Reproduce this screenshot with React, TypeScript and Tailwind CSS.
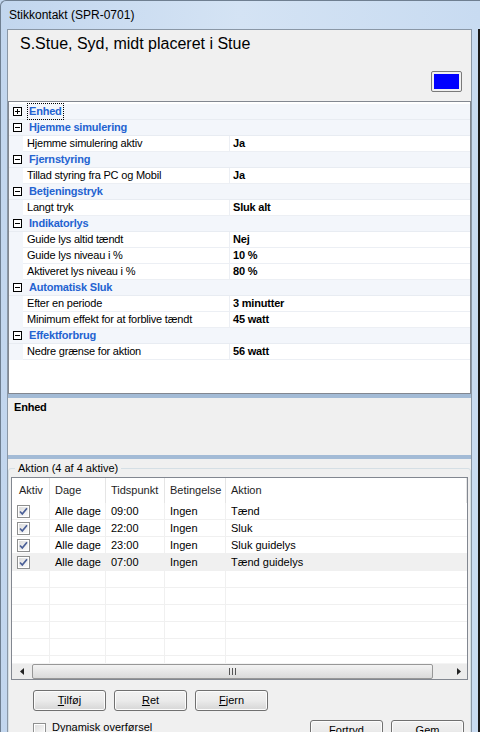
import React from "react";

const FONT = { fontFamily: '"Liberation Sans", Arial, sans-serif' };

type Prop = [string, string];
type Cat = { name: string; collapsed?: boolean; items: Prop[] };

const categories: Cat[] = [
  { name: "Enhed", collapsed: true, items: [] },
  { name: "Hjemme simulering", items: [["Hjemme simulering aktiv", "Ja"]] },
  { name: "Fjernstyring", items: [["Tillad styring fra PC og Mobil", "Ja"]] },
  { name: "Betjeningstryk", items: [["Langt tryk", "Sluk alt"]] },
  {
    name: "Indikatorlys",
    items: [
      ["Guide lys altid tændt", "Nej"],
      ["Guide lys niveau i %", "10 %"],
      ["Aktiveret lys niveau i %", "80 %"],
    ],
  },
  {
    name: "Automatisk Sluk",
    items: [
      ["Efter en periode", "3 minutter"],
      ["Minimum effekt for at forblive tændt", "45 watt"],
    ],
  },
  { name: "Effektforbrug", items: [["Nedre grænse for aktion", "56 watt"]] },
];

const actions = [
  { dage: "Alle dage", tid: "09:00", bet: "Ingen", aktion: "Tænd" },
  { dage: "Alle dage", tid: "22:00", bet: "Ingen", aktion: "Sluk" },
  { dage: "Alle dage", tid: "23:00", bet: "Ingen", aktion: "Sluk guidelys" },
  { dage: "Alle dage", tid: "07:00", bet: "Ingen", aktion: "Tænd guidelys" },
];

function ExpandBox({ plus }: { plus?: boolean }) {
  return (
    <svg width="9" height="9" viewBox="0 0 9 9" className="shrink-0">
      <rect x="0.5" y="0.5" width="8" height="8" fill="white" stroke="#000" />
      <line x1="2" y1="4.5" x2="7" y2="4.5" stroke="#000" />
      {plus && <line x1="4.5" y1="2" x2="4.5" y2="7" stroke="#000" />}
    </svg>
  );
}

function CheckIcon({ checked }: { checked?: boolean }) {
  return (
    <svg width="13" height="13" viewBox="0 0 13 13">
      <defs>
        <linearGradient id="cbg" x1="0" y1="0" x2="1" y2="1">
          <stop offset="0" stopColor="#dcdcdc" />
          <stop offset="1" stopColor="#fbfbfb" />
        </linearGradient>
      </defs>
      <rect x="0.5" y="0.5" width="12" height="12" fill="#fff" stroke="#8e8f8f" />
      <rect x="2" y="2" width="9" height="9" fill="url(#cbg)" />
      {checked && (
        <path d="M3 6.5 L5.3 9 L10 3.2" fill="none" stroke="#4a5f97" strokeWidth="1.7" />
      )}
    </svg>
  );
}

function Btn({ label, u, className }: { label: string; u: number; className?: string }) {
  return (
    <div
      className={
        "h-[21px] w-[73px] shrink-0 rounded-[3px] border border-[#707070] bg-gradient-to-b from-[#f2f2f2] via-[#ebebeb] to-[#d6d6d6] flex items-center justify-center text-[11px] text-black shadow-[inset_0_0_0_1px_#fcfcfc] " +
        (className ?? "")
      }
    >
      <span>
        <span className="underline">{label.slice(0, u)}</span>
        {label.slice(u)}
      </span>
    </div>
  );
}

function PropertyGrid() {
  return (
    <div className="h-[293px] shrink-0 border border-[#828790] bg-white pt-[2px] overflow-hidden tracking-[-0.2px]">
      {categories.map((c) => (
        <div key={c.name}>
          <div className="h-[16px] flex items-center bg-[#f3f6fb] border-b border-[#e8ecf2]">
            <div className="w-[14px] flex justify-end pr-[1px] pl-[2px]">
              <ExpandBox plus={c.collapsed} />
            </div>
            <div
              className={
                "ml-[5px] h-[15px] flex items-center px-[1px] text-[11px] font-bold text-[#2463d1] " +
                (c.collapsed ? "outline outline-1 outline-dotted outline-black" : "")
              }
            >
              {c.name}
            </div>
          </div>
          {c.items.map(([k, v]) => (
            <div key={k} className="h-[16px] flex text-[11px] text-black">
              <div className="w-[14px] bg-[#f3f6fb]" />
              <div className="w-[207px] flex items-center pl-[4px] border-b border-r border-[#eceff4]">
                {k}
              </div>
              <div className="flex-1 flex items-center pl-[3px] font-bold border-b border-[#eceff4]">
                {v}
              </div>
            </div>
          ))}
        </div>
      ))}
    </div>
  );
}

function ActionList() {
  const cols = ["w-[38px]", "w-[56px]", "w-[59px]", "w-[61px]", "flex-1"];
  return (
    <div className="mx-[2px] h-[203px] border border-[#828790] bg-white flex flex-col overflow-hidden">
      <div className="h-[25px] flex text-[11px] text-[#1e1e1e] shrink-0">
        {["Aktiv", "Dage", "Tidspunkt", "Betingelse", "Aktion"].map((h, i) => (
          <div
            key={h}
            className={
              cols[i] +
              " flex items-center border-r border-[#e5e5e5] " +
              (i === 0 ? "pl-[7px]" : "pl-[5px]")
            }
          >
            {h}
          </div>
        ))}
      </div>
      <div className="flex-1 overflow-hidden">
        {Array.from({ length: 10 }).map((_, r) => {
          const a = actions[r];
          return (
            <div
              key={r}
              className={
                "h-[17px] flex text-[11px] text-black border-b border-[#f0f0f0] " +
                (r === 3 ? "bg-[#f0f0f0]" : "")
              }
            >
              <div className={cols[0] + " flex items-center pl-[5px] border-r border-[#f0f0f0]"}>
                {a && <CheckIcon checked />}
              </div>
              <div className={cols[1] + " flex items-center pl-[5px] border-r border-[#f0f0f0]"}>
                {a?.dage}
              </div>
              <div className={cols[2] + " flex items-center pl-[5px] border-r border-[#f0f0f0]"}>
                {a?.tid}
              </div>
              <div className={cols[3] + " flex items-center pl-[5px] border-r border-[#f0f0f0]"}>
                {a?.bet}
              </div>
              <div className={cols[4] + " flex items-center pl-[5px]"}>{a?.aktion}</div>
            </div>
          );
        })}
      </div>
      {/* horizontal scrollbar */}
      <div className="h-[16px] shrink-0 flex items-center bg-[#ececec] border-t border-[#f4f4f4]">
        <div className="w-[20px] flex justify-center">
          <svg width="4" height="7" viewBox="0 0 4 7">
            <path d="M4 0 L0 3.5 L4 7 Z" fill="#222" />
          </svg>
        </div>
        <div className="w-[401px] h-[15px] rounded-[2px] border border-[#979797] bg-gradient-to-b from-[#f3f3f3] to-[#dadada] flex items-center justify-center">
          <div className="flex gap-[2px]">
            <div className="w-[1px] h-[7px] bg-[#555]" />
            <div className="w-[1px] h-[7px] bg-[#555]" />
            <div className="w-[1px] h-[7px] bg-[#555]" />
          </div>
        </div>
        <div className="flex-1 flex justify-end pr-[6px]">
          <svg width="4" height="7" viewBox="0 0 4 7">
            <path d="M0 0 L4 3.5 L0 7 Z" fill="#222" />
          </svg>
        </div>
      </div>
    </div>
  );
}

export default function App() {
  return (
    <div
      className="w-[480px] h-[732px] overflow-hidden flex flex-col bg-gradient-to-r from-[#c2d6ee] via-[#d4e3f4] to-[#c8dbf1]"
      style={FONT}
    >
      {/* title bar */}
      <div className="h-[29px] shrink-0 flex items-center pl-[8px] text-[12px] text-black border-l border-t border-[#6f7f91] rounded-tl-[6px]">
        Stikkontakt (SPR-0701)
      </div>

      <div className="flex-1 flex min-h-0">
        <div className="w-[7px] shrink-0 border-l border-[#6f7f91]" />

        <div className="flex-1 flex flex-col bg-[#f0f0f0] border-l border-t border-r border-[#8a97a6] min-h-0">
          {/* header */}
          <div className="h-[71px] shrink-0 flex flex-col">
            <div className="pl-[12px] pt-[2px] text-[16px] text-black leading-[24px]">
              S.Stue, Syd, midt placeret i Stue
            </div>
            <div className="flex justify-end pr-[9px] mt-[15px]">
              <div className="w-[31px] h-[21px] rounded-[2px] border border-[#7a7a7a] bg-[#f0f0f0] p-[2px]">
                <div className="w-full h-full bg-[#0000ff]" />
              </div>
            </div>
          </div>

          <PropertyGrid />

          <div className="h-[4px] shrink-0 bg-[#a3bbd6]" />
          {/* description */}
          <div className="h-[57px] shrink-0 bg-[#f0f0f0] px-[6px] pt-[1px] text-[11px] font-bold text-black tracking-[-0.2px]">
            Enhed
          </div>
          <div className="h-[4px] shrink-0 bg-[#a3bbd6]" />

          {/* group box */}
          <div className="relative mt-[9px] shrink-0 h-[300px] border border-[#d5dfe5] rounded-[3px] pt-[8px]">
            <div className="absolute -top-[7px] left-[6px] bg-[#f0f0f0] px-[3px] text-[11px] text-black leading-[13px]">
              Aktion (4 af 4 aktive)
            </div>
            <ActionList />

            <div className="flex gap-[8px] pl-[24px] mt-[10px]">
              <Btn label="Tilføj" u={1} />
              <Btn label="Ret" u={1} />
              <Btn label="Fjern" u={1} />
            </div>

            <div className="flex items-start mt-[9px] pl-[24px]">
              <div className="mt-[3px] w-[13px] h-[13px] border border-[#8e8f8f] bg-gradient-to-br from-[#dcdcdc] to-[#fbfbfb] shadow-[inset_0_0_0_1px_#fff]" />
              <div className="ml-[6px] text-[11px] text-black leading-[13px] mt-[1px]">Dynamisk overførsel</div>
              <div className="ml-auto flex gap-[8px] pr-[6px]">
                <Btn label="Fortryd" u={0} />
                <Btn label="Gem" u={0} />
              </div>
            </div>
          </div>
        </div>

        <div className="w-[8px] shrink-0 border-r-2 border-[#1a1a1a]" />
      </div>
    </div>
  );
}
